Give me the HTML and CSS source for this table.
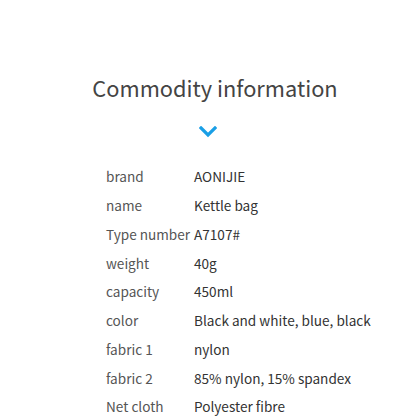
FILE: index.html
```html
<!DOCTYPE html>
<html>
<head>
<meta charset="utf-8">
<link rel="stylesheet" href="styles.css">
</head>
<body>
<div class="page">
  <h1 class="title">Commodity information</h1>
  <div class="chev">
    <svg width="18" height="12" viewBox="0 0 18 12"><path d="M2 2 L9 9 L16 2" fill="none" stroke="#1a9fe6" stroke-width="3.2" stroke-linecap="square"/></svg>
  </div>
  <div class="specs">
    <div class="row"><span class="k">brand</span><span class="v">AONIJIE</span></div>
    <div class="row"><span class="k">name</span><span class="v">Kettle bag</span></div>
    <div class="row"><span class="k">Type number</span><span class="v">A7107#</span></div>
    <div class="row"><span class="k">weight</span><span class="v">40g</span></div>
    <div class="row"><span class="k">capacity</span><span class="v">450ml</span></div>
    <div class="row"><span class="k">color</span><span class="v">Black and white, blue, black</span></div>
    <div class="row"><span class="k">fabric 1</span><span class="v">nylon</span></div>
    <div class="row"><span class="k">fabric 2</span><span class="v">85% nylon, 15% spandex</span></div>
    <div class="row"><span class="k">Net cloth</span><span class="v">Polyester fibre</span></div>
  </div>
</div>
</body>
</html>
```
FILE: styles.css
```css
html, body { margin: 0; padding: 0; background: #fff; }
body { font-family: "Noto Sans CJK SC", "Noto Sans", sans-serif; width: 416px; height: 416px; overflow: hidden; }
.page { padding-top: 70px; }
.title { margin: 0; padding-left: 14px; text-align: center; font-size: 21.8px; font-weight: 400; color: #444; line-height: 36px; }
.chev { display: flex; justify-content: center; margin-top: 20px; height: 12px; }
.chev svg { display: block; }
.specs { margin-top: 24px; padding-left: 106px; display: flex; flex-direction: column; }
.row { display: grid; grid-template-columns: 88px 1fr; height: 28.75px; align-items: center; font-size: 13.6px; }
.k { color: #555; white-space: nowrap; }
.v { color: #333; white-space: nowrap; }
```
